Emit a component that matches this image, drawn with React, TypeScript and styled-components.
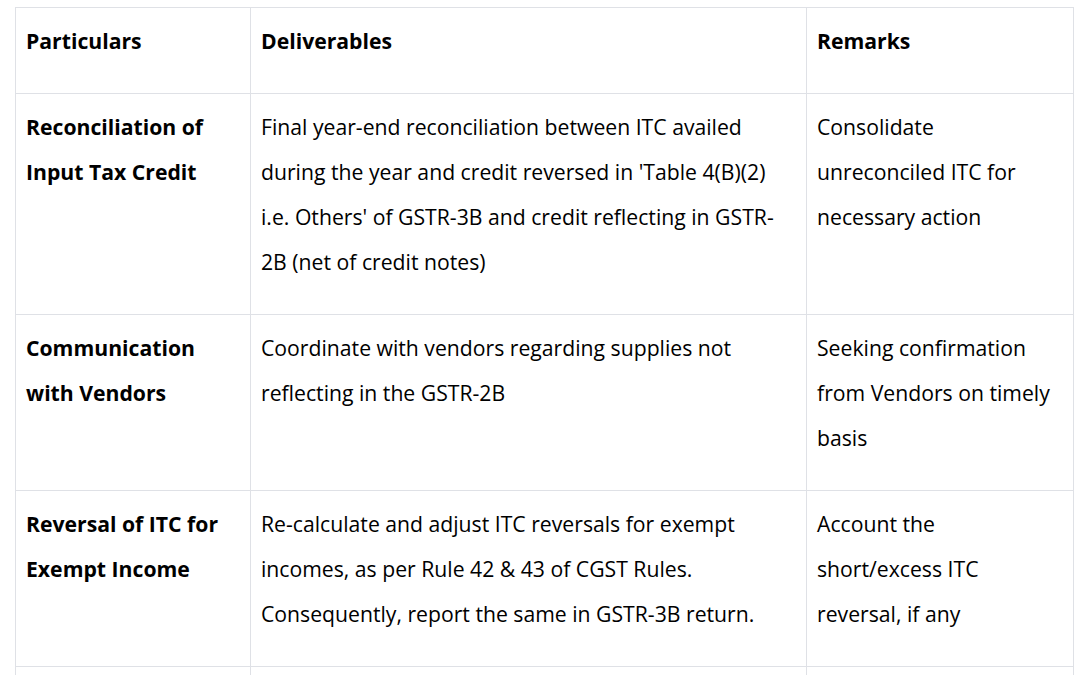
import React from 'react';
import styled, { createGlobalStyle } from 'styled-components';

const GlobalStyle = createGlobalStyle`
  body {
    margin: 0;
    background: #ffffff;
    font-family: "Open Sans", "Noto Sans", sans-serif;
    color: #000000;
  }
`;

const Page = styled.div`
  padding: 7px 13px 0 15px;
`;

const Table = styled.table`
  width: 1058px;
  border-collapse: collapse;
  table-layout: fixed;
  font-size: 21.2px;
`;

const Col = styled.col<{ $w: number }>`
  width: ${(p) => p.$w}px;
`;

const HeadCell = styled.th`
  border: 1px solid #dfe1e6;
  padding: 10px 11px 0 10px;
  text-align: left;
  vertical-align: top;
  font-weight: 700;
  line-height: 45px;
`;

const Cell = styled.td<{ $bold?: boolean }>`
  border: 1px solid #dfe1e6;
  padding: 10px 11px 0 10px;
  vertical-align: top;
  font-weight: ${(p) => (p.$bold ? 700 : 400)};
  line-height: 45px;
`;

const SpacerCell = styled.td`
  border: 1px solid #dfe1e6;
  height: 40px;
`;

const Para = styled.p`
  margin: 0 0 30px;
`;

type Row = { title: string; work: string; note: string };

const rows: Row[] = [
  {
    title: 'Reconciliation of Input Tax Credit',
    work:
      "Final year-end reconciliation between ITC availed during the year and credit reversed in 'Table 4(B)(2) i.e. Others' of GSTR-3B and credit reflecting in GSTR-2B (net of credit notes)",
    note: 'Consolidate unreconciled ITC for necessary action',
  },
  {
    title: 'Communication with Vendors',
    work: 'Coordinate with vendors regarding supplies not reflecting in the GSTR-2B',
    note: 'Seeking confirmation from Vendors on timely basis',
  },
  {
    title: 'Reversal of ITC for Exempt Income',
    work:
      'Re-calculate and adjust ITC reversals for exempt incomes, as per Rule 42 & 43 of CGST Rules. Consequently, report the same in GSTR-3B return.',
    note: 'Account the short/excess ITC reversal, if any',
  },
];

export default function App() {
  return (
    <Page>
      <GlobalStyle />
      <Table>
        <colgroup>
          <Col $w={235} />
          <Col $w={556} />
          <Col $w={267} />
        </colgroup>
        <thead>
          <tr>
            <HeadCell><Para>Particulars</Para></HeadCell>
            <HeadCell><Para>Deliverables</Para></HeadCell>
            <HeadCell><Para>Remarks</Para></HeadCell>
          </tr>
        </thead>
        <tbody>
          {rows.map((r) => (
            <tr key={r.title}>
              <Cell $bold><Para>{r.title}</Para></Cell>
              <Cell><Para>{r.work}</Para></Cell>
              <Cell><Para>{r.note}</Para></Cell>
            </tr>
          ))}
          <tr>
            <SpacerCell />
            <SpacerCell />
            <SpacerCell />
          </tr>
        </tbody>
      </Table>
    </Page>
  );
}
